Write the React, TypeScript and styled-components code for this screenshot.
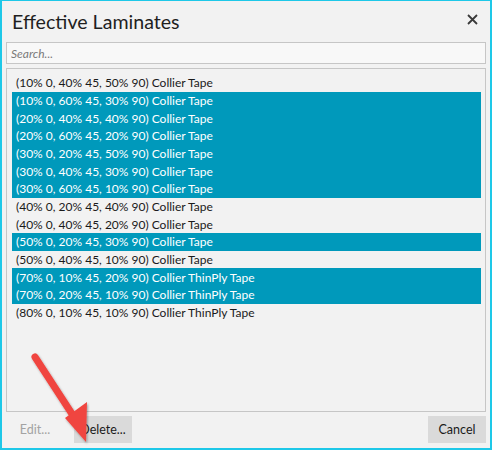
import React from "react";
import styled, { createGlobalStyle } from "styled-components";

const Global = createGlobalStyle`
  html, body { margin: 0; padding: 0; background: #f2f2f2; }
  * { box-sizing: border-box; }
`;

const Dialog = styled.div`
  position: relative;
  width: 492px;
  height: 450px;
  background: #f2f2f2;
  border-style: solid;
  border-color: #1ec8e8;
  border-width: 1px 2px 2px 2px;
  display: flex;
  flex-direction: column;
  padding: 0 4px 5px 4px;
  font-family: Lato, "Noto Sans", sans-serif;
  color: #1a1a1a;
`;

const Header = styled.div`
  height: 41px;
  display: flex;
  align-items: center;
  justify-content: space-between;
  padding: 0 6px 0 6px;
`;

const Title = styled.h1`
  margin: 0;
  font-size: 19.6px;
  font-weight: 400;
  color: #1f1f1f;
  line-height: 1;
`;

const CloseButton = styled.button`
  border: none;
  background: transparent;
  width: 16px;
  height: 16px;
  padding: 0;
  display: flex;
  align-items: center;
  justify-content: center;
  margin-top: -4px;
`;

const SearchInput = styled.input`
  height: 22px;
  width: 100%;
  border: 1px solid #c6c6c6;
  background: #f8f8f8;
  font-family: inherit;
  font-size: 12px;
  padding: 0 4px;
  outline: none;
  &::placeholder { color: #7a7a7a; font-style: italic; }
`;

const List = styled.div`
  margin-top: 4px;
  height: 344px;
  border: 1px solid #c6c6c6;
  padding: 5px 4px 0 5px;
  display: flex;
  flex-direction: column;
`;

const Row = styled.div<{ $selected?: boolean }>`
  height: 17.66px;
  padding-left: 4px;
  display: flex;
  align-items: center;
  font-size: 12px;
  white-space: nowrap;
  background: ${(p) => (p.$selected ? "#0099bb" : "transparent")};
  color: ${(p) => (p.$selected ? "#ffffff" : "#1a1a1a")};
`;

const Footer = styled.div`
  margin-top: 4px;
  display: flex;
  align-items: center;
  gap: 10px;
`;

const Button = styled.button<{ $disabled?: boolean; $right?: boolean }>`
  width: 58px;
  height: 27px;
  border: none;
  background: ${(p) => (p.$disabled ? "transparent" : "#dadada")};
  color: ${(p) => (p.$disabled ? "#a3a3a3" : "#1a1a1a")};
  font-family: inherit;
  font-size: 12.5px;
  padding: 0;
  margin-left: ${(p) => (p.$right ? "auto" : "0")};
`;

const ArrowOverlay = styled.svg`
  position: absolute;
  left: 0;
  top: 0;
  pointer-events: none;
`;

const rows: [string, boolean][] = [
  ["(10% 0, 40% 45, 50% 90) Collier Tape", false],
  ["(10% 0, 60% 45, 30% 90) Collier Tape", true],
  ["(20% 0, 40% 45, 40% 90) Collier Tape", true],
  ["(20% 0, 60% 45, 20% 90) Collier Tape", true],
  ["(30% 0, 20% 45, 50% 90) Collier Tape", true],
  ["(30% 0, 40% 45, 30% 90) Collier Tape", true],
  ["(30% 0, 60% 45, 10% 90) Collier Tape", true],
  ["(40% 0, 20% 45, 40% 90) Collier Tape", false],
  ["(40% 0, 40% 45, 20% 90) Collier Tape", false],
  ["(50% 0, 20% 45, 30% 90) Collier Tape", true],
  ["(50% 0, 40% 45, 10% 90) Collier Tape", false],
  ["(70% 0, 10% 45, 20% 90) Collier ThinPly Tape", true],
  ["(70% 0, 20% 45, 10% 90) Collier ThinPly Tape", true],
  ["(80% 0, 10% 45, 10% 90) Collier ThinPly Tape", false],
];

export default function App() {
  return (
    <>
      <Global />
      <Dialog>
        <Header>
          <Title>Effective Laminates</Title>
          <CloseButton aria-label="Close">
            <svg width="11" height="11" viewBox="0 0 11 11">
              <path d="M1 1 L10 10 M10 1 L1 10" stroke="#3a3a3a" strokeWidth="1.8" />
            </svg>
          </CloseButton>
        </Header>
        <SearchInput placeholder="Search..." />
        <List>
          {rows.map(([t, s]) => (
            <Row key={t} $selected={s}>{t}</Row>
          ))}
        </List>
        <Footer>
          <Button $disabled>Edit...</Button>
          <Button>Delete...</Button>
          <Button $right>Cancel</Button>
        </Footer>
        <ArrowOverlay width="492" height="450" viewBox="0 0 492 450">
          <defs>
            <filter id="sh" x="-20%" y="-20%" width="140%" height="140%">
              <feDropShadow dx="1" dy="1.5" stdDeviation="1.2" floodColor="#000" floodOpacity="0.35" />
            </filter>
          </defs>
          <g filter="url(#sh)">
            <line x1="33" y1="356" x2="72" y2="416" stroke="#f0453f" strokeWidth="7" strokeLinecap="round" />
            <polygon points="84,441 63,417 85,401" fill="#f0453f" />
          </g>
        </ArrowOverlay>
      </Dialog>
    </>
  );
}
